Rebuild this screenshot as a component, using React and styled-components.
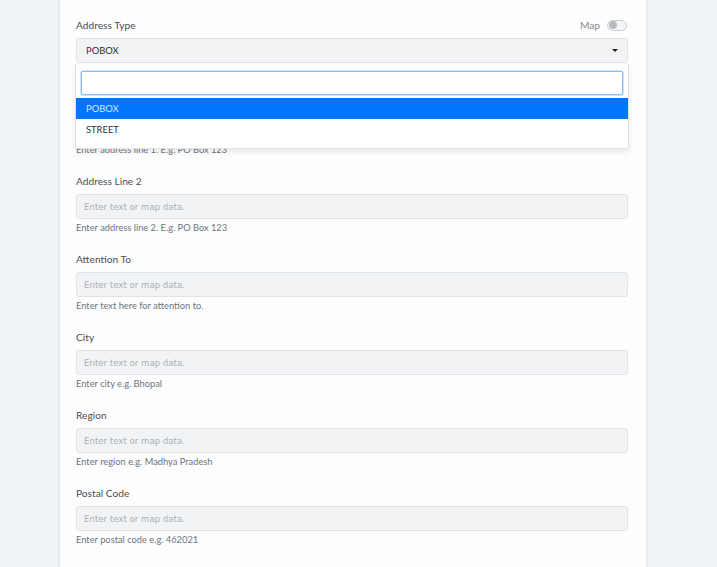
import React from 'react'
import styled, { createGlobalStyle } from 'styled-components'

const GlobalStyle = createGlobalStyle`
  html, body {
    margin: 0;
    padding: 0;
    background: #eff3f6;
    overflow: hidden;
  }
  * {
    box-sizing: border-box;
  }
`;

const Page = styled.div`
  padding-left: 59px;
  width: 717px;
  height: 567px;
`;

const Card = styled.section`
  width: 588px;
  min-height: 567px;
  background: #fdfdfe;
  border-left: 1px solid #e4e8ee;
  border-right: 1px solid #e4e8ee;
  box-shadow: 0 0 3px rgba(40, 60, 90, 0.06);
  padding: 18px 18px 0 16px;
  display: flex;
  flex-direction: column;
  gap: 18px;
  font-family: Lato, "Open Sans", sans-serif;
`;

const Field = styled.div`
  display: flex;
  flex-direction: column;
  position: relative;
`;

const LabelRow = styled.div`
  display: flex;
  align-items: center;
  justify-content: space-between;
  height: 14px;
  margin-bottom: 6px;
`;

const Label = styled.label`
  font-size: 10.2px;
  font-weight: 400;
  color: #4a4f55;
  line-height: 14px;
`;

const MapSwitch = styled.div`
  display: flex;
  align-items: center;
  gap: 7px;
  margin-right: 1px;
  font-size: 10.2px;
  color: #868c93;
`;

const Track = styled.span`
  width: 20px;
  height: 11px;
  border: 1px solid #c9cdd2;
  border-radius: 6px;
  background: #f4f5f7;
  display: flex;
  align-items: center;
  padding-left: 1px;
`;

const Knob = styled.span`
  width: 8px;
  height: 8px;
  border-radius: 50%;
  background: #b7bbc0;
`;

const Input = styled.input`
  height: 25px;
  width: 100%;
  background: #f1f3f5;
  border: 1px solid #e0e3e7;
  border-radius: 3px;
  padding: 0 7px;
  font-family: "DejaVu Sans", Verdana, sans-serif;
  font-size: 8.6px;
  color: #333;
  outline: none;
  &::placeholder {
    color: #aab0b5;
  }
`;

const Select = styled.div`
  height: 25px;
  background: #f1f3f5;
  border: 1px solid #e0e3e7;
  border-radius: 3px;
  padding: 0 9px 0 9px;
  display: flex;
  align-items: center;
  justify-content: space-between;
  font-size: 9.4px;
  color: #2c3035;
`;

const Caret = styled.span`
  width: 0;
  height: 0;
  border-left: 3px solid transparent;
  border-right: 3px solid transparent;
  border-top: 3px solid #222;
`;

const Hint = styled.div`
  margin-top: 3px;
  height: 12px;
  line-height: 12px;
  font-size: 9.3px;
  color: #6d747a;
`;

const Menu = styled.div`
  position: absolute;
  top: 46px;
  left: -1px;
  right: -1px;
  z-index: 5;
  background: #fff;
  border: 1px solid #dfe2e6;
  border-top: none;
  border-radius: 0 0 3px 3px;
  box-shadow: 0 3px 6px rgba(0, 0, 0, 0.08);
  padding: 7px 0 8px 0;
`;

const SearchBox = styled.div`
  padding: 0 5px;
  margin-bottom: 3px;
`;

const Search = styled.input`
  width: 100%;
  height: 24px;
  border: 1px solid #86bdfa;
  border-radius: 2px;
  box-shadow: 0 0 0 1px rgba(120, 180, 250, 0.35);
  outline: none;
  background: #fff;
`;

const Option = styled.div`
  height: 21px;
  display: flex;
  align-items: center;
  padding-left: 10px;
  font-size: 9.4px;
  background: ${({ $active }) => ($active ? '#0076fe' : 'transparent')};
  color: ${({ $active }) => ($active ? '#d8e8ff' : '#2c3035')};
`;

const fields = [
  { label: 'Address Line 1', hint: 'Enter address line 1. E.g. PO Box 123' },
  { label: 'Address Line 2', hint: 'Enter address line 2. E.g. PO Box 123' },
  { label: 'Attention To', hint: 'Enter text here for attention to.' },
  { label: 'City', hint: 'Enter city e.g. Bhopal' },
  { label: 'Region', hint: 'Enter region e.g. Madhya Pradesh' },
  { label: 'Postal Code', hint: 'Enter postal code e.g. 462021' },
  { label: 'Country', hint: 'Enter country e.g. India' },
];

const App = () => {
  return (
    <Page>
      <GlobalStyle />
      <Card>
        <Field>
          <LabelRow>
            <Label>Address Type</Label>
            <MapSwitch>
              Map
              <Track>
                <Knob />
              </Track>
            </MapSwitch>
          </LabelRow>
          <Select>
            POBOX
            <Caret />
          </Select>
          <Hint />
          <Menu>
            <SearchBox>
              <Search />
            </SearchBox>
            <Option $active>POBOX</Option>
            <Option>STREET</Option>
          </Menu>
        </Field>

        {fields.map((f) => (
          <Field key={f.label}>
            <LabelRow>
              <Label>{f.label}</Label>
            </LabelRow>
            <Input placeholder="Enter text or map data." />
            <Hint>{f.hint}</Hint>
          </Field>
        ))}
      </Card>
    </Page>
  );
}

export default App;
